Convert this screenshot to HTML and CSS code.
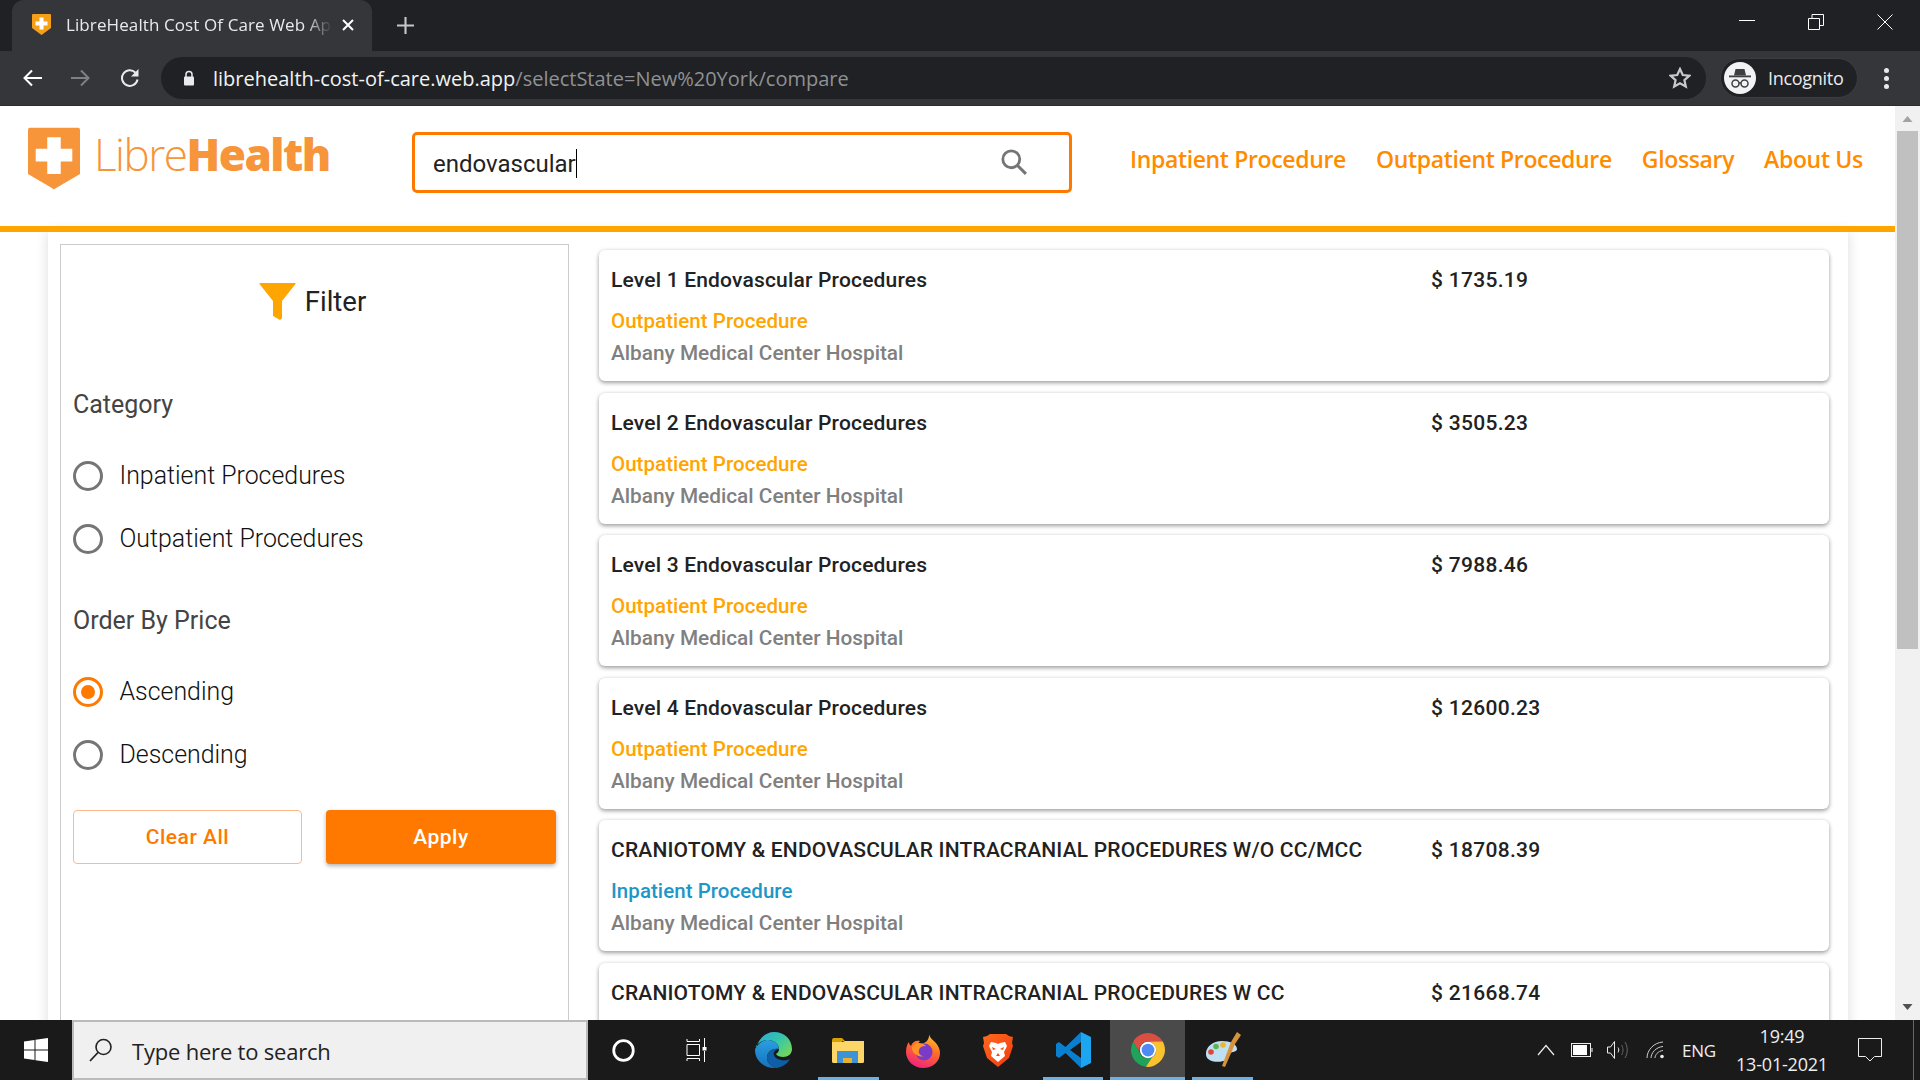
FILE: index.html
```html
<!DOCTYPE html>
<html lang="en">
<head>
<meta charset="utf-8">
<title>LibreHealth Cost Of Care Web App</title>
<link rel="stylesheet" href="styles.css">
</head>
<body>
<div class="screen">
  <div class="tabstrip">
    <div class="tab">
      <svg class="favicon" viewBox="0 0 19 21"><path d="M1 0h17a1 1 0 0 1 1 1v13l-9.500 7L0 14V1a1 1 0 0 1 1-1z" fill="#f6a01a"/><path d="M7.500 3.500h4v4h4v4h-4v4h-4v-4h-4v-4h4z" fill="#fff"/></svg>
      <span class="tab-title">LibreHealth Cost Of Care Web Ap</span>
      <svg class="tab-close" viewBox="0 0 12 12"><path d="M1 1l10 10M11 1L1 11" stroke="#fff" stroke-width="2"/></svg>
    </div>
    <svg class="new-tab" viewBox="0 0 16 16"><path d="M8 0v16M0 8h16" stroke="#c4c7c9" stroke-width="2"/></svg>
    <div class="win-controls">
      <svg class="win-btn" viewBox="0 0 16 16"><path d="M0 6.500h16" stroke="#fff"/></svg>
      <svg class="win-btn" viewBox="0 0 16 16"><path d="M.5 4.500h11v11H.5zM4 4.500V.5h11.500v11h-4" fill="none" stroke="#fff"/></svg>
      <svg class="win-btn" viewBox="0 0 16 16"><path d="M.5.500l15 15M15.500.500l-15 15" stroke="#fff"/></svg>
    </div>
  </div>
  <div class="toolbar">
    <svg class="tb-icon" viewBox="0 0 20 18"><path d="M20 9H3M10 1.500L2.500 9l7.500 7.500" fill="none" stroke="#fff" stroke-width="2"/></svg>
    <svg class="tb-icon" viewBox="0 0 20 18"><path d="M0 9h17M10 1.500L17.500 9 10 16.500" fill="none" stroke="#7e8083" stroke-width="2"/></svg>
    <svg class="tb-icon" viewBox="0 0 20 18"><path d="M17.500 10.500A7.800 7.800 0 1 1 15.300 3.500" fill="none" stroke="#e8eaed" stroke-width="2"/><path d="M18.500 0v7.500H11z" fill="#e8eaed"/></svg>
    <div class="omnibox">
      <svg class="lock" viewBox="0 0 12 16"><path d="M3 7V4.500a3 3 0 0 1 6 0V7" fill="none" stroke="#e8eaed" stroke-width="1.500"/><rect x="1" y="6.500" width="10" height="9" rx="1" fill="#e8eaed"/></svg>
      <span class="url"><span class="url-host">librehealth-cost-of-care.web.app</span><span class="url-path">/selectState=New%20York/compare</span></span>
      <svg class="star" viewBox="0 0 20 20"><path d="M10 1.800l2.500 5.500 6 .6-4.500 4 1.300 5.900L10 14.800l-5.300 3 1.300-5.900-4.500-4 6-.6z" fill="none" stroke="#c8c9cb" stroke-width="2"/></svg>
    </div>
    <div class="profile">
      <svg class="avatar" viewBox="0 0 32 32"><circle cx="16" cy="16" r="16" fill="#f1f3f4"/><path d="M11.500 7h9l1.500 6.500h-12z" fill="#3c4043"/><rect x="5" y="13.500" width="22" height="1.800" fill="#3c4043"/><circle cx="11.500" cy="21.500" r="3.500" fill="none" stroke="#3c4043" stroke-width="1.500"/><circle cx="20.500" cy="21.500" r="3.500" fill="none" stroke="#3c4043" stroke-width="1.500"/><path d="M15 21h2" stroke="#3c4043" stroke-width="1.500"/></svg>
      <span class="profile-name">Incognito</span>
    </div>
    <div class="menu-dots"><i></i><i></i><i></i></div>
  </div>
  <div class="viewport">
    <div class="page">
      <header class="site-header">
        <div class="logo">
          <svg class="logo-mark" viewBox="0 0 54 64"><path d="M2 0h50a2 2 0 0 1 2 2v46L27 64 0 48V2a2 2 0 0 1 2-2z" fill="#f7953a"/><path d="M20 10h14v12h12v13H34v13H20V35H8V22h12z" fill="#fff"/></svg>
          <span class="logo-text"><span class="logo-libre">Libre</span><span class="logo-health">Health</span></span>
        </div>
        <div class="search">
          <span class="search-text">endovascular</span><span class="caret"></span>
          <svg class="search-icon" viewBox="0 0 24 24"><circle cx="9.500" cy="9.500" r="7.800" fill="none" stroke="#757575" stroke-width="2.600"/><path d="M15 15l8 8" stroke="#757575" stroke-width="2.800"/></svg>
        </div>
        <nav class="site-nav">
          <a>Inpatient Procedure</a>
          <a>Outpatient Procedure</a>
          <a>Glossary</a>
          <a>About Us</a>
        </nav>
      </header>
      <main class="content">
        <aside class="filter">
          <div class="filter-head">
            <svg class="funnel" viewBox="0 0 37 37"><path d="M1 0h35q1 0 .5 1L23 18v17l-2 2-7-4V18L.500 1Q0 0 1 0z" fill="#ffa500"/></svg>
            <span>Filter</span>
          </div>
          <h3 class="group-title first">Category</h3>
          <label class="radio"><span class="dot"></span>Inpatient Procedures</label>
          <label class="radio"><span class="dot"></span>Outpatient Procedures</label>
          <h3 class="group-title second">Order By Price</h3>
          <label class="radio"><span class="dot on"></span>Ascending</label>
          <label class="radio"><span class="dot"></span>Descending</label>
          <div class="actions">
            <button class="btn btn-clear">Clear All</button>
            <button class="btn btn-apply">Apply</button>
          </div>
        </aside>
        <section class="results">
          <article class="card">
            <div class="card-top"><span class="name">Level 1 Endovascular Procedures</span><span class="price">$ 1735.19</span></div>
            <div class="type out">Outpatient Procedure</div>
            <div class="hospital">Albany Medical Center Hospital</div>
          </article>
          <article class="card">
            <div class="card-top"><span class="name">Level 2 Endovascular Procedures</span><span class="price">$ 3505.23</span></div>
            <div class="type out">Outpatient Procedure</div>
            <div class="hospital">Albany Medical Center Hospital</div>
          </article>
          <article class="card">
            <div class="card-top"><span class="name">Level 3 Endovascular Procedures</span><span class="price">$ 7988.46</span></div>
            <div class="type out">Outpatient Procedure</div>
            <div class="hospital">Albany Medical Center Hospital</div>
          </article>
          <article class="card">
            <div class="card-top"><span class="name">Level 4 Endovascular Procedures</span><span class="price">$ 12600.23</span></div>
            <div class="type out">Outpatient Procedure</div>
            <div class="hospital">Albany Medical Center Hospital</div>
          </article>
          <article class="card">
            <div class="card-top"><span class="name">CRANIOTOMY &amp; ENDOVASCULAR INTRACRANIAL PROCEDURES W/O CC/MCC</span><span class="price">$ 18708.39</span></div>
            <div class="type in">Inpatient Procedure</div>
            <div class="hospital">Albany Medical Center Hospital</div>
          </article>
          <article class="card">
            <div class="card-top"><span class="name">CRANIOTOMY &amp; ENDOVASCULAR INTRACRANIAL PROCEDURES W CC</span><span class="price">$ 21668.74</span></div>
          </article>
        </section>
      </main>
    </div>
    <div class="scrollbar">
      <svg class="sb-arrow sb-up" viewBox="0 0 10 6"><path d="M5 0l5 6H0z" fill="#a3a3a3"/></svg>
      <div class="sb-thumb"></div>
      <div class="sb-track"></div>
      <svg class="sb-arrow" viewBox="0 0 10 6"><path d="M5 6l5-6H0z" fill="#505050"/></svg>
    </div>
  </div>
  <footer class="taskbar">
    <svg class="start" viewBox="0 0 24 24"><path d="M0 3.500L10.500 2v9.500H0zM11.500 1.800L24 0v11.500H11.500zM0 12.500h10.500V22L0 20.500zM11.500 12.500H24V24l-12.500-1.800z" fill="#fff"/></svg>
    <div class="task-search">
      <svg class="ts-icon" viewBox="0 0 24 24"><circle cx="14.500" cy="9" r="7.500" fill="none" stroke="#222" stroke-width="1.600"/><path d="M9 14.500L1 23" stroke="#222" stroke-width="1.800"/></svg>
      <span>Type here to search</span>
    </div>
    <div class="task-apps">
      <div class="app-plain"><svg class="cortana" viewBox="0 0 20 20"><circle cx="10" cy="10" r="8.500" fill="none" stroke="#fff" stroke-width="2.400"/></svg></div>
      <div class="app-plain app-plain-last"><svg class="taskview" viewBox="0 0 28 24"><path d="M1 3.500V1M1 3.500h12.500V1M1 6.500h12.500v11H1zM1 23v-2.500h12.500V23M18.500 0v9M18.500 13v11" fill="none" stroke="#fff"/><rect x="16.500" y="9" width="4" height="3.500" fill="#fff"/></svg></div>
      <div class="app">
        <svg class="i-edge" viewBox="0 0 37 36"><defs><linearGradient id="eg" x1="0" y1="0" x2="1" y2=".8"><stop offset="0" stop-color="#26a8df"/><stop offset=".55" stop-color="#37c6a8"/><stop offset="1" stop-color="#74d858"/></linearGradient><linearGradient id="eb" x1="0" y1="0" x2="0" y2="1"><stop offset="0" stop-color="#2a9fe0"/><stop offset="1" stop-color="#1671bd"/></linearGradient></defs><path d="M1.500 15C4 6 11 0 19 0c10 0 18 7 18 17 0 5-4 8-9 8-3 0-6-1-7-3 2-1 3-3 3-5 0-5-5-9-11-9-5 0-10 3-12.500 7z" fill="url(#eg)"/><path d="M1.500 15C4 11 8 8 13 8c6 0 11 4 11 9-7-1-12 3-12 9 0 4 3 8 9 10C10 37 0 29 0 18c0-1 .5-2 1.500-3z" fill="url(#eb)"/><path d="M24 17c-7-1-12 3-12 9 0 4 3 8 9 10 6-.5 11-4 14-9-3 2-10 2-14-1-3-3-3-6 0-8 1-.5 2-1 3-1z" fill="#0f5ea8"/></svg>
      </div>
      <div class="app active-line">
        <svg class="i-files" viewBox="0 0 32 25"><path d="M0 2a2 2 0 0 1 2-2h8l3 3h-3v2H0z" fill="#d9a100"/><path d="M0 4h10l3-1h19v20.500a1.500 1.500 0 0 1-1.500 1.500h-29A1.500 1.500 0 0 1 0 23.500z" fill="#fdd668"/><path d="M5 25V13h21v12h-6v-5h-9v5z" fill="#3d93d6"/><rect x="11" y="20" width="9" height="5" fill="#e9b12a"/></svg>
      </div>
      <div class="app">
        <svg class="i-firefox" viewBox="0 0 34 35"><defs><linearGradient id="fg" x1=".7" y1="0" x2=".3" y2="1"><stop offset="0" stop-color="#ffc82b"/><stop offset=".45" stop-color="#ff6a2b"/><stop offset="1" stop-color="#f01f7e"/></linearGradient></defs><path d="M23 0c0 4 3 6 6 9 3 3 5 7 5 11 0 9-8 15-17 15S0 28 0 19c0-4 1-8 3-10 0 2 1 3 2 4 1-4 5-6 9-5-2 2-2 3 0 3 5 0 10-4 9-11z" fill="url(#fg)"/><circle cx="18" cy="19" r="8.500" fill="#7b3bc9"/><path d="M6 14c3-5 10-5 14-1-4 0-6 1-7 4-1 4 2 6 5 6-5 2-13-3-12-9z" fill="#ff9126"/></svg>
      </div>
      <div class="app">
        <svg class="i-brave" viewBox="0 0 30 33"><defs><linearGradient id="bg" x1="0" y1="0" x2="1" y2="1"><stop offset="0" stop-color="#ff6a1f"/><stop offset="1" stop-color="#f23a0c"/></linearGradient></defs><path d="M7 0h16l3 2 4 1-1 6 1 3-4 12-11 9-11-9L0 12l1-3-1-6 4-1z" fill="url(#bg)"/><path d="M8 8l5 1 2 1 2-1 5-1 2 4-3 6 1 4-7 6-7-6 1-4-3-6z" fill="#fff"/><path d="M9 13l4 2-3 1zM21 13l-4 2 3 1zM15 19l-2 3h4z" fill="#f34d14"/></svg>
      </div>
      <div class="app active-line">
        <svg class="i-vscode" viewBox="0 0 36 36"><path d="M26 0L10.500 15 4 10 1 12v12l3 2 6.500-5L26 36V26L15 18l11-8z" fill="#0a7fd0"/><path d="M26 0l10 5v26l-10 5z" fill="#1ea5f0"/></svg>
      </div>
      <div class="app active-line current">
        <svg class="i-chrome" viewBox="0 0 48 48"><path d="M24 0C15 0 7 5 3.200 12L12 27a12 12 0 0 1 12-15h20.800C40.600 5 33 0 24 0z" fill="#db4f42"/><path d="M3.200 12A24 24 0 0 0 21 47.800L30 34A12 12 0 0 1 12 27z" fill="#1da35a"/><path d="M44.800 12H24a12 12 0 0 1 6 22L21 47.800C34 49.500 48 38 48 24c0-4-1.200-8.500-3.200-12z" fill="#fbc22f"/><circle cx="24" cy="24" r="11.500" fill="#fff"/><circle cx="24" cy="24" r="9" fill="#4f89f4"/></svg>
      </div>
      <div class="app active-line">
        <svg class="i-paint" viewBox="0 0 36 36"><path d="M1 23C0 15 8 9 17 9c8 0 15 3 15 8 0 3-5 3-8 4-2 1 1 5-3 7-5 3-19 3-20-5z" fill="#bfe0f2"/><circle cx="6" cy="20" r="2.800" fill="#d94a3a"/><circle cx="11" cy="14.500" r="2.800" fill="#5db353"/><circle cx="18" cy="13" r="2.800" fill="#f0b429"/><path d="M32 0l4 3-6 9-4-2zM26 10l4 2-10 23-3-1z" fill="#d7933a"/></svg>
      </div>
    </div>
    <div class="tray">
      <svg class="tray-chev" viewBox="0 0 18 12"><path d="M1 11l8-9.500L17 11" fill="none" stroke="#eee" stroke-width="1.200"/></svg>
      <svg class="tray-bat" viewBox="0 0 22 14"><rect x=".5" y=".5" width="19" height="13" fill="none" stroke="#eee"/><rect x="2" y="2" width="14" height="10" fill="#fff"/><rect x="20" y="5" width="2" height="4" fill="#888"/></svg>
      <svg class="tray-vol" viewBox="0 0 22 18"><path d="M.5 6h3l4-5.500v17l-4-5.500h-3z" fill="none" stroke="#eee"/><path d="M11 6.500c1 1.500 1 3.500 0 5" fill="none" stroke="#eee"/><path d="M14.500 4c2 3 2 7 0 10M18 1c3 5 3 11 0 16" fill="none" stroke="#666"/></svg>
      <svg class="tray-wifi" viewBox="0 0 20 18"><path d="M1 17C1 9 8 1.500 17 1M5 17c0-5 5-11 12-11.500M9 17c0-3 3-7 8-7.500" fill="none" stroke="#ccc"/><circle cx="16" cy="15.500" r="1.800" fill="#eee"/></svg>
      <span class="tray-lang">ENG</span>
      <div class="clock"><span>19:49</span><span>13-01-2021</span></div>
      <svg class="tray-note" viewBox="0 0 24 24"><path d="M.5.500h23v18h-7l-4.500 4.500-4.500-4.500h-7z" fill="none" stroke="#eee"/></svg>
      <span class="tray-line"></span>
    </div>
  </footer>
</div>
</body>
</html>
```

FILE: styles.css
```css
* { box-sizing: border-box; }
html, body { margin: 0; padding: 0; height: 100%; overflow: hidden; }
body { font-family: Roboto, "Liberation Sans", sans-serif; background: #fff; }
.screen { width: 1920px; height: 1080px; display: flex; flex-direction: column; overflow: hidden; }

/* browser chrome */
.tabstrip { height: 51px; flex: none; background: #202124; display: flex; align-items: flex-end; font-family: "Open Sans", "Noto Sans", sans-serif; }
.tab { width: 360px; height: 51px; margin-left: 12px; padding: 0 0 2px 20px; background: #35363a; border-radius: 12px 12px 0 0; display: flex; align-items: center; color: #e8eaed; flex: none; }
.favicon { width: 19px; height: 21px; flex: none; }
.tab-title { margin-left: 15px; width: 266px; font-size: 17px; letter-spacing: .1px; white-space: nowrap; -webkit-mask-image: linear-gradient(90deg, #000 90%, transparent); mask-image: linear-gradient(90deg, #000 90%, transparent); }
.tab-close { width: 12px; height: 12px; margin-left: 10px; flex: none; }
.new-tab { width: 17px; height: 17px; margin: 0 0 17px 25px; flex: none; }
.win-controls { margin-left: auto; height: 51px; display: flex; align-items: center; padding: 0 27px 7px 0; gap: 53px; }
.win-btn { width: 16px; height: 16px; }
.toolbar { height: 55px; flex: none; background: #35363a; display: flex; align-items: center; border-bottom: 1px solid #2a2b2e; padding-left: 22px; }
.tb-icon { width: 20px; height: 18px; flex: none; margin-right: 29px; }
.tb-icon + .omnibox { margin-left: -8px; }
.omnibox { width: 1545px; height: 42px; background: #202124; border-radius: 21px; display: flex; align-items: center; padding: 0 15px 0 22px; color: #fff; flex: none; }
.lock { width: 12px; height: 16px; flex: none; }
.url { margin-left: 18px; font-size: 20px; font-family: "Open Sans", "Noto Sans", sans-serif; white-space: nowrap; }
.url-host { color: #f1f3f4; }
.url-path { color: #8f9194; }
.star { width: 22px; height: 22px; margin-left: auto; flex: none; }
.profile { margin-left: 14px; width: 138px; height: 40px; background: #202124; border: 1px solid #3c3d41; border-radius: 20px; padding-left: 3px; display: flex; align-items: center; flex: none; }
.avatar { width: 32px; height: 32px; flex: none; }
.profile-name { margin-left: 12px; color: #e8eaed; font-size: 18px; font-family: "Open Sans", "Noto Sans", sans-serif; letter-spacing: -.3px; }
.menu-dots { margin-left: 26px; display: flex; flex-direction: column; gap: 3px; }
.menu-dots i { display: block; width: 5px; height: 5px; border-radius: 50%; background: #e8eaed; }

/* page */
.viewport { flex: 1; min-height: 0; display: flex; overflow: hidden; }
.page { flex: 1; min-width: 0; overflow: hidden; background: #fff; }
.site-header { height: 126px; border-bottom: 6px solid #ffa500; display: flex; align-items: flex-start; position: relative; }
.logo { display: flex; align-items: flex-start; margin: 21px 0 0 28px; width: 384px; flex: none; }
.logo-mark { width: 52px; height: 63px; flex: none; }
.logo-text { margin-left: 14px; margin-top: 1px; font-family: "Open Sans", Lato, sans-serif; font-size: 44px; line-height: 52px; color: #f7953a; letter-spacing: -1.500px; white-space: nowrap; }
.logo-libre { font-weight: 300; }
.logo-health { font-weight: 800; }
.search { margin-top: 26px; width: 660px; height: 61px; border: 3px solid #ff7900; border-radius: 5px; display: flex; align-items: center; padding: 2px 0 0 18px; position: relative; flex: none; }
.search-text { font-size: 24px; color: #222; }
.caret { width: 1px; height: 29px; background: #000; }
.search-icon { position: absolute; right: 42px; top: 14px; width: 26px; height: 26px; }
.site-nav { margin: 37px 0 0 58px; display: flex; gap: 30px; font-family: "Open Sans", "Noto Sans", sans-serif; font-size: 23px; font-weight: 600; color: #ff8c00; white-space: nowrap; letter-spacing: -.35px; }

.content { margin: 0 47px 0 48px; height: 800px; padding: 12px 19px 0 12px; background: #fff; box-shadow: 0 0 12px rgba(0,0,0,.14); display: flex; gap: 30px; align-items: flex-start; }
.filter { width: 509px; height: 800px; flex: none; border: 1px solid #ccc; padding: 0 12px; }
.filter-head { display: flex; justify-content: center; align-items: center; gap: 9px; height: 37px; margin-top: 38px; padding-right: 4px; font-size: 27.500px; color: #222; }
.funnel { width: 37px; height: 37px; }
.group-title { margin: 0; font-size: 25px; font-weight: 400; color: #444; line-height: 30px; }
.group-title.first { margin-top: 70px; margin-bottom: 24px; }
.group-title.second { margin-top: 36px; margin-bottom: 24px; }
.radio { display: flex; align-items: center; height: 63px; font-size: 24.900px; font-weight: 300; color: #111; }
.dot { width: 30px; height: 30px; border: 3px solid #757575; border-radius: 50%; margin-right: 16.500px; flex: none; display: flex; align-items: center; justify-content: center; }
.dot.on { border-color: #ff7900; }
.dot.on::after { content: ""; width: 14px; height: 14px; border-radius: 50%; background: #ff7900; }
.actions { display: flex; justify-content: space-between; margin-top: 24px; }
.btn { height: 54px; border-radius: 4px; font-family: Roboto, sans-serif; font-size: 21px; font-weight: 500; letter-spacing: .5px; }
.btn-clear { width: 229px; background: #fff; border: 1px solid #ffb98a; color: #ff7900; }
.btn-apply { width: 230px; background: #ff7900; border: 0; color: #fff; box-shadow: 0 2px 4px rgba(0,0,0,.3); }

.results { flex: 1; min-width: 0; padding-top: 6px; }
.card { height: 131px; margin-bottom: 11.600px; padding: 17px 12px 0; background: #fff; border-radius: 6px; box-shadow: 0 2px 4px rgba(0,0,0,.35), 0 0 4px rgba(0,0,0,.08); }
.card-top { display: flex; font-size: 21px; font-weight: 500; color: #222; line-height: 26px; }
.name { width: 820px; flex: none; white-space: nowrap; letter-spacing: .18px; }
.price { letter-spacing: .3px; }
.type { margin-top: 15px; font-size: 20.500px; font-weight: 500; line-height: 26px; letter-spacing: .05px; }
.type.out { color: #ffa500; }
.type.in { color: #1e96c8; }
.hospital { margin-top: 6px; font-size: 20.800px; font-weight: 500; color: #808080; line-height: 26px; }

.scrollbar { width: 25px; flex: none; background: #f1f1f1; display: flex; flex-direction: column; align-items: center; padding: 0 2px; }
.sb-arrow { width: 11px; height: 6px; margin: 10px 0; flex: none; }
.sb-up { margin-bottom: 9px; }
.sb-thumb { width: 100%; height: 518px; background: #c0c0c0; flex: none; }
.sb-track { flex: 1; }

/* taskbar */
.taskbar { height: 60px; flex: none; background: #1a1a1a; display: flex; align-items: center; font-family: "Open Sans", "Noto Sans", sans-serif; }
.start { width: 24px; height: 24px; margin-left: 24px; flex: none; }
.task-search { margin-left: 24px; width: 516px; height: 60px; background: #f0f0f0; border: 2px solid #bbb; display: flex; align-items: center; padding: 2px 0 0 15px; color: #222; font-size: 22px; letter-spacing: -.2px; flex: none; }
.ts-icon { width: 24px; height: 24px; flex: none; margin: -2px 19px 0 0; }
.task-apps { display: flex; height: 60px; margin-left: -1px; }
.app-plain { width: 72px; height: 60px; display: flex; align-items: center; justify-content: center; flex: none; }
.app-plain-last { width: 77px; padding-left: 5px; }
.app { width: 74.900px; height: 60px; display: flex; align-items: center; justify-content: center; position: relative; flex: none; }
.active-line::after { content: ""; position: absolute; left: 7px; right: 7px; bottom: 0; height: 3px; background: #6cb0e6; }
.current { background: #4a4a4a; }
.current::after { left: 0; right: 0; }
.cortana { width: 23px; height: 23px; }
.taskview { width: 28px; height: 24px; }
.i-edge { width: 37px; height: 36px; }
.i-files { width: 32px; height: 25px; }
.i-firefox { width: 34px; height: 35px; }
.i-brave { width: 30px; height: 33px; }
.i-vscode { width: 36px; height: 36px; }
.i-chrome { width: 34px; height: 34px; }
.i-paint { width: 36px; height: 36px; }
.tray { margin-left: auto; display: flex; align-items: center; height: 60px; color: #eee; padding-right: 6px; }
.tray-chev { width: 18px; height: 12px; }
.tray-bat { width: 22px; height: 14px; margin-left: 16px; }
.tray-vol { width: 22px; height: 18px; margin-left: 14px; }
.tray-wifi { width: 20px; height: 18px; margin-left: 17px; }
.tray-lang { margin-left: 16px; font-size: 17px; letter-spacing: -.2px; }
.clock { margin-left: 20px; width: 92px; display: flex; flex-direction: column; align-items: center; font-size: 18px; gap: 6px; letter-spacing: -.2px; line-height: 22px; white-space: nowrap; }
.tray-note { width: 24px; height: 24px; margin-left: 30px; flex: none; }
.tray-line { width: 1px; height: 60px; background: #666; margin-left: 31px; }
```
